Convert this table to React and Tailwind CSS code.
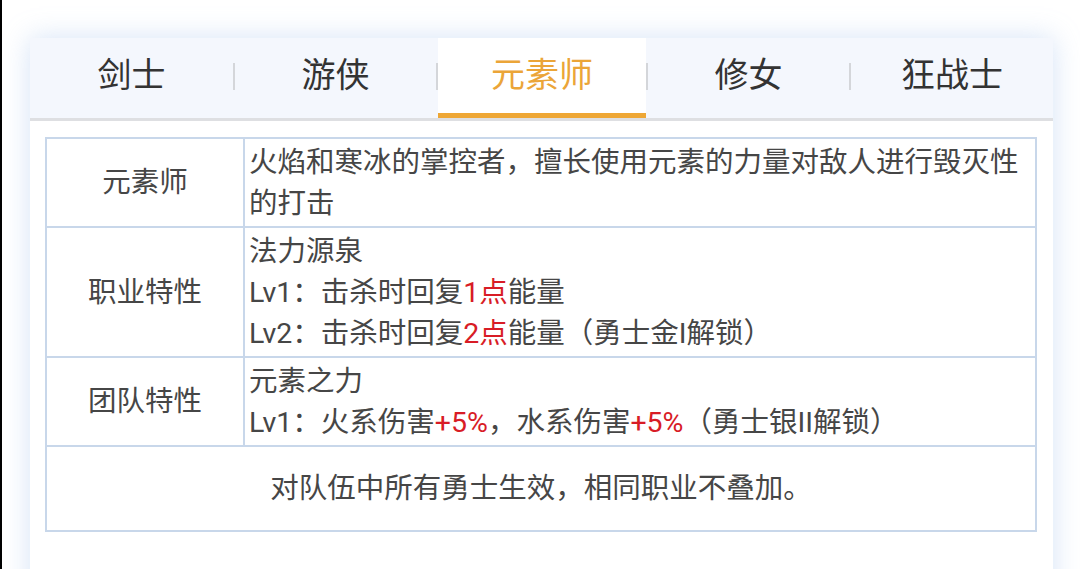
const tabs = [
  { name: "剑士", w: "w-[203px]" },
  { name: "游侠", w: "w-[201px]" },
  { name: "元素师", w: "w-[208px]", active: true },
  { name: "修女", w: "w-[201px]" },
  { name: "狂战士", w: "flex-1" },
]

const Red = ({ children }) => <span className="text-[#d81c26]">{children}</span>

const TabBar = () => (
  <div className="flex bg-[#f4f7fd] border-b-[3px] border-[#dedfe2]">
    {tabs.map((t, i) => (
      <div key={t.name} className={`flex items-center ${t.w === "flex-1" ? "flex-1" : ""}`}>
        {i > 0 && <div className="w-[2px] h-[27px] bg-[#d4d6da] mt-[-4px]" />}
        <div
          className={`${t.w} h-[80px] flex items-center justify-center border-b-[5px] text-[34px] ${
            t.active ? "bg-white border-[#eea735] text-[#eba538]" : "border-transparent text-[#333333]"
          }`}
        >
          {t.name}
        </div>
      </div>
    ))}
  </div>
)

export default function App() {
  return (
    <div
      className="flex min-h-[569px] h-[569px] overflow-hidden bg-white [text-spacing-trim:space-all]"
      style={{ fontFamily: 'Roboto, "Noto Sans CJK SC", sans-serif' }}
    >
      <div className="w-[2px] shrink-0 bg-black" />
      <div className="flex-1 pt-[38px] pl-[28px] pr-[27px]">
        <div className="bg-white shadow-[0_0_26px_rgba(150,185,235,0.4)] h-[600px]">
          <TabBar />
          <div className="pt-[16px] pl-[15px] pr-[16px]">
            <table className="w-full border-collapse text-[28.5px] leading-[41px] text-[#464646]">
              <tbody>
                <tr>
                  <td className="w-[198px] border-2 border-[#c8d7ea] text-center align-middle">元素师</td>
                  <td className="border-2 border-[#c8d7ea] pl-[4px] pt-[3px] pb-[2px]">
                    火焰和寒冰的掌控者，擅长使用元素的力量对敌人进行毁灭性的打击
                  </td>
                </tr>
                <tr>
                  <td className="border-2 border-[#c8d7ea] text-center align-middle">职业特性</td>
                  <td className="border-2 border-[#c8d7ea] pl-[4px] pt-[3px] pb-[2px]">
                    <div>法力源泉</div>
                    <div>
                      Lv1：击杀时回复<Red>1点</Red>能量
                    </div>
                    <div>
                      Lv2：击杀时回复<Red>2点</Red>能量（勇士金I解锁）
                    </div>
                  </td>
                </tr>
                <tr>
                  <td className="border-2 border-[#c8d7ea] text-center align-middle">团队特性</td>
                  <td className="border-2 border-[#c8d7ea] pl-[4px] pt-[3px] pb-[2px]">
                    <div>元素之力</div>
                    <div>
                      Lv1：火系伤害<Red>+5%</Red>，水系伤害<Red>+5%</Red>（勇士银II解锁）
                    </div>
                  </td>
                </tr>
                <tr>
                  <td colSpan={2} className="border-2 border-[#c8d7ea] text-center py-[21px]">
                    对队伍中所有勇士生效，相同职业不叠加。
                  </td>
                </tr>
              </tbody>
            </table>
          </div>
        </div>
      </div>
    </div>
  )
}
